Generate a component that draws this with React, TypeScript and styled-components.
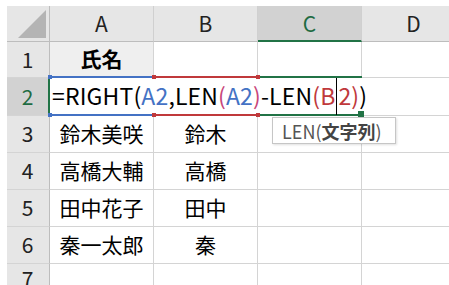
import React from "react";
import styled, { createGlobalStyle, css } from "styled-components";

const GlobalStyle = createGlobalStyle`
  html, body {
    margin: 0;
    padding: 0;
    background: #ffffff;
    overflow: hidden;
  }
  body {
    font-family: "Noto Sans CJK JP", "Noto Sans", sans-serif;
    color: #000;
  }
`;

const GREEN = "#217346";
const BLUE = "#4472c4";
const RED = "#c0393b";
const PINK = "#c8467a";

const Sheet = styled.div`
  display: grid;
  grid-template-columns: 43px repeat(4, 104px);
  grid-template-rows: 36px 36px 38px 37px 37px 37px 37px 30px;
  margin: 6px 0 0 7px;
  width: 459px;
`;

const Corner = styled.div`
  background: #e6e6e6;
  border-right: 1px solid #bdbdbd;
  border-bottom: 1px solid #bdbdbd;
  box-sizing: border-box;
  position: relative;
  svg {
    display: block;
  }
`;

const ColHeader = styled.div<{ $selected?: boolean }>`
  box-sizing: border-box;
  background: ${(p) => (p.$selected ? "#d2d2d2" : "#e6e6e6")};
  color: ${(p) => (p.$selected ? "#1e6b42" : "#222")};
  border-right: 1px solid #d0d0d0;
  border-bottom: ${(p) => (p.$selected ? `2px solid ${GREEN}` : "1px solid #bdbdbd")};
  display: flex;
  align-items: center;
  justify-content: center;
  font-size: 21px;
  padding-bottom: ${(p) => (p.$selected ? "1px" : "2px")};
`;

const RowHeader = styled.div<{ $selected?: boolean }>`
  box-sizing: border-box;
  background: ${(p) => (p.$selected ? "#d2d2d2" : "#e6e6e6")};
  color: ${(p) => (p.$selected ? "#1e6b42" : "#222")};
  border-right: ${(p) => (p.$selected ? `2px solid ${GREEN}` : "1px solid #bdbdbd")};
  border-bottom: 1px solid #d4d4d4;
  display: flex;
  align-items: center;
  justify-content: center;
  font-size: 21px;
  padding-bottom: 2px;
  padding-right: ${(p) => (p.$selected ? "0" : "1px")};
`;

const Cell = styled.div<{ $shaded?: boolean; $bold?: boolean; $boxed?: boolean }>`
  box-sizing: border-box;
  background: ${(p) => (p.$shaded ? "#efefef" : "#ffffff")};
  border-right: 1px solid #d4d4d4;
  border-bottom: 1px solid #d4d4d4;
  ${(p) =>
    p.$boxed &&
    css`
      border-right: 2px solid #dedede;
      border-bottom: 2px solid #dedede;
    `}
  display: flex;
  align-items: center;
  justify-content: center;
  font-size: 21px;
  font-weight: ${(p) => (p.$bold ? 700 : 400)};
  padding-bottom: 3px;
  white-space: nowrap;
  overflow: hidden;
`;

const EditBox = styled.div`
  grid-column: 2 / span 3;
  position: relative;
  background: #fff;
  border-bottom: 1px solid #d4d4d4;
  box-sizing: border-box;
  display: flex;
  align-items: center;
  padding-left: 2px;
  z-index: 2;
`;

const RangeLayer = styled.div`
  position: absolute;
  left: 0;
  right: 0;
  top: -2px;
  bottom: -1px;
  display: grid;
  grid-template-columns: repeat(3, 104px);
  pointer-events: none;
`;

const RangeBox = styled.div<{ $color: string }>`
  position: relative;
  border-top: 2px solid ${(p) => p.$color};
  border-bottom: 2px solid ${(p) => p.$color};
`;

const Handle = styled.span<{ $color: string; $x: "left" | "right"; $y: "top" | "bottom"; $size?: number }>`
  position: absolute;
  width: ${(p) => p.$size ?? 4}px;
  height: ${(p) => p.$size ?? 4}px;
  background: ${(p) => p.$color};
  ${(p) => (p.$x === "left" ? "left: -2px;" : "right: -2px;")}
  ${(p) => (p.$y === "top" ? "top: -3px;" : "bottom: -3px;")}
  z-index: 1;
`;

const Formula = styled.div`
  font-size: 23px;
  letter-spacing: 0.15px;
  line-height: 1;
  white-space: nowrap;
  display: flex;
  align-items: center;
  height: 100%;
  padding-bottom: 3px;
  box-sizing: border-box;
  position: relative;
  z-index: 2;
`;

const Tok = styled.span<{ $color?: string }>`
  color: ${(p) => p.$color ?? "#000"};
`;

const Caret = styled.span`
  display: inline-block;
  width: 1px;
  height: 37px;
  margin: 3px 1px 0 1px;
  background: #000;
  align-self: center;
`;

const Tooltip = styled.div`
  position: absolute;
  top: calc(100% + 2px);
  left: 222px;
  width: 124px;
  height: 27px;
  box-sizing: border-box;
  background: #fff;
  border: 1px solid #c6c6c6;
  box-shadow: 1px 1px 2px rgba(0, 0, 0, 0.12);
  display: flex;
  align-items: center;
  padding-left: 9px;
  font-size: 18px;
  color: #555;
  white-space: nowrap;
  z-index: 3;
`;

const Strong = styled.b`
  font-weight: 700;
  color: #444;
`;

const columns = ["A", "B", "C", "D"];
const names: [string, string][] = [
  ["鈴木美咲", "鈴木"],
  ["高橋大輔", "高橋"],
  ["田中花子", "田中"],
  ["秦一太郎", "秦"],
];

export default function App() {
  return (
    <>
      <GlobalStyle />
      <Sheet>
        <Corner>
          <svg width="42" height="35" viewBox="0 0 42 35">
            <polygon points="11,32 39,32 39,4" fill="#b4b4b4" />
          </svg>
        </Corner>
        {columns.map((c) => (
          <ColHeader key={c} $selected={c === "C"}>
            {c}
          </ColHeader>
        ))}

        <RowHeader>1</RowHeader>
        <Cell $shaded $bold>
          氏名
        </Cell>
        <Cell />
        <Cell />
        <Cell />

        <RowHeader $selected>2</RowHeader>
        <EditBox>
          <RangeLayer>
            <RangeBox $color={BLUE}>
              <Handle $color={BLUE} $x="left" $y="top" />
              <Handle $color={BLUE} $x="left" $y="bottom" />
            </RangeBox>
            <RangeBox $color={RED}>
              <Handle $color={RED} $x="left" $y="top" />
              <Handle $color={RED} $x="left" $y="bottom" />
              <Handle $color={RED} $x="right" $y="top" />
              <Handle $color={RED} $x="right" $y="bottom" />
            </RangeBox>
            <RangeBox $color={GREEN}>
              <Handle $color={GREEN} $x="right" $y="bottom" $size={6} />
            </RangeBox>
          </RangeLayer>
          <Formula>
            <Tok>=RIGHT(</Tok>
            <Tok $color={BLUE}>A2</Tok>
            <Tok>,LEN</Tok>
            <Tok $color={PINK}>(</Tok>
            <Tok $color={BLUE}>A2</Tok>
            <Tok $color={PINK}>)</Tok>
            <Tok>-LEN</Tok>
            <Tok $color={RED}>(B</Tok>
            <Caret />
            <Tok $color={RED}>2)</Tok>
            <Tok>)</Tok>
          </Formula>
          <Tooltip>
            LEN(<Strong>文字列</Strong>)
          </Tooltip>
        </EditBox>
        <Cell />

        {names.map(([full, last], i) => (
          <React.Fragment key={full}>
            <RowHeader>{i + 3}</RowHeader>
            <Cell>{full}</Cell>
            <Cell>{last}</Cell>
            <Cell />
            <Cell />
          </React.Fragment>
        ))}

        <RowHeader>7</RowHeader>
        <Cell />
        <Cell />
        <Cell />
        <Cell />
      </Sheet>
    </>
  );
}
